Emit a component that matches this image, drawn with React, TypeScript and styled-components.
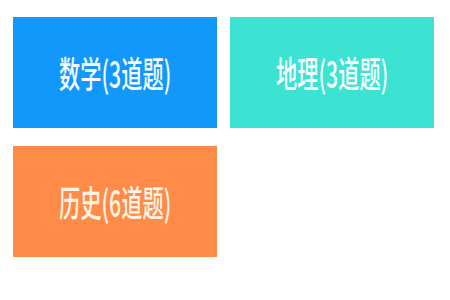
import styled, { createGlobalStyle } from "styled-components";

const GlobalStyle = createGlobalStyle`
  html, body {
    margin: 0;
    padding: 0;
    background: #ffffff;
  }
  body {
    font-family: "Noto Sans CJK SC", "Noto Sans", sans-serif;
  }
`;

const Page = styled.div`
  width: 450px;
  height: 300px;
  box-sizing: border-box;
  padding: 17px 0 0 12.5px;
`;

const Grid = styled.div`
  display: grid;
  grid-template-columns: 204.5px 204.5px;
  grid-auto-rows: 110.5px;
  column-gap: 12.5px;
  row-gap: 18.5px;
`;

const Tile = styled.div<{ $bg: string; $fg: string }>`
  display: flex;
  align-items: center;
  justify-content: center;
  background: ${(p) => p.$bg};
  color: ${(p) => p.$fg};
`;

const Label = styled.span`
  display: inline-block;
  font-size: 36px;
  font-weight: 500;
  line-height: 1;
  white-space: nowrap;
  transform: scaleX(0.59);
`;

interface Subject {
  name: string;
  count: number;
  bg: string;
  fg: string;
}

const subjects: Subject[] = [
  { name: "数学", count: 3, bg: "#1298fb", fg: "#f4fbff" },
  { name: "地理", count: 3, bg: "#3ce3d3", fg: "#f6fffd" },
  { name: "历史", count: 6, bg: "#fe8c48", fg: "#fff3e6" },
];

export default function App() {
  return (
    <>
      <GlobalStyle />
      <Page>
        <Grid>
          {subjects.map((s) => (
            <Tile key={s.name} $bg={s.bg} $fg={s.fg}>
              <Label>
                {s.name}({s.count}道题)
              </Label>
            </Tile>
          ))}
        </Grid>
      </Page>
    </>
  );
}
